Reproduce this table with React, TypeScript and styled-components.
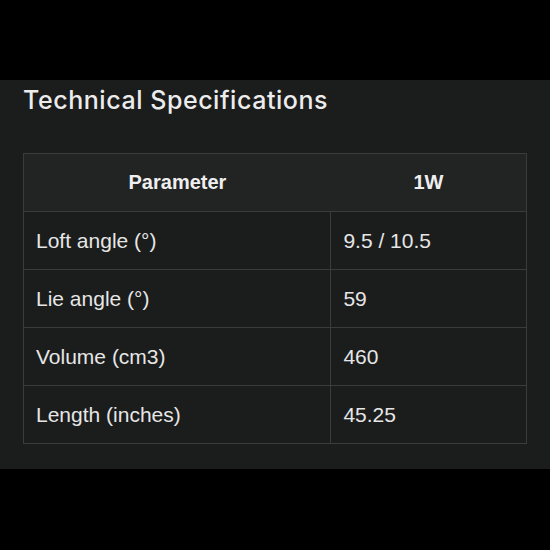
import React from "react";
import styled, { createGlobalStyle } from "styled-components";

const GlobalStyle = createGlobalStyle`
  html, body {
    margin: 0;
    padding: 0;
    background: #000000;
  }
  body {
    width: 550px;
    height: 550px;
    overflow: hidden;
  }
`;

const Page = styled.div`
  padding-top: 80px;
`;

const Panel = styled.section`
  background: #1b1c1c;
  height: 389px;
  box-sizing: border-box;
  padding: 3px 23px 0 23px;
`;

const Title = styled.h2`
  margin: 0;
  font-family: Inter, "Liberation Sans", sans-serif;
  font-weight: 500;
  font-size: 25px;
  line-height: 34px;
  color: #ececec;
  letter-spacing: 0.55px;
`;

const Table = styled.table`
  margin-top: 36px;
  width: 504px;
  border-collapse: collapse;
  font-family: "Liberation Sans", Arial, sans-serif;
  color: #e6e6e6;
`;

const HeadCell = styled.th`
  height: 57px;
  padding: 0 12px;
  background: #222323;
  border-top: 1px solid #3a3b3b;
  border-bottom: 1px solid #3a3b3b;
  &:first-child {
    border-left: 1px solid #3a3b3b;
  }
  &:last-child {
    border-right: 1px solid #3a3b3b;
  }
  font-size: 20px;
  font-weight: 700;
  text-align: center;
  color: #efefef;
`;

const Cell = styled.td`
  height: 57px;
  padding: 0 12px;
  border: 1px solid #3a3b3b;
  font-size: 21px;
  font-weight: 400;
  text-align: left;
`;

const specs: [string, string][] = [
  ["Loft angle (°)", "9.5 / 10.5"],
  ["Lie angle (°)", "59"],
  ["Volume (cm3)", "460"],
  ["Length (inches)", "45.25"],
];

export default function App() {
  return (
    <Page>
      <GlobalStyle />
      <Panel>
        <Title>Technical Specifications</Title>
        <Table>
          <colgroup>
            <col style={{ width: 308 }} />
            <col style={{ width: 196 }} />
          </colgroup>
          <thead>
            <tr>
              <HeadCell>Parameter</HeadCell>
              <HeadCell>1W</HeadCell>
            </tr>
          </thead>
          <tbody>
            {specs.map(([name, value]) => (
              <tr key={name}>
                <Cell>{name}</Cell>
                <Cell>{value}</Cell>
              </tr>
            ))}
          </tbody>
        </Table>
      </Panel>
    </Page>
  );
}
